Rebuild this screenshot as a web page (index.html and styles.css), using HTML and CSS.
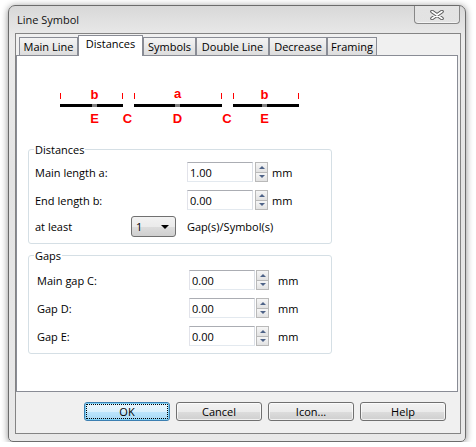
FILE: index.html
```html
<!DOCTYPE html>
<html lang="en">

<head>
    <meta charset="UTF-8">
    <title>Line Symbol</title>
    <link rel="stylesheet" href="styles.css">
</head>

<body>
    <div class="window">
        <div class="titlebar">
            <span class="title">Line Symbol</span>
            <button class="close">
                <svg width="14" height="10" viewBox="0 0 14 10">
                    <path d="M2 1.5 L12 8.5 M12 1.5 L2 8.5" stroke="#5a5a5a" stroke-width="3.6" stroke-linecap="round" />
                    <path d="M2 1.5 L12 8.5 M12 1.5 L2 8.5" stroke="#fff" stroke-width="1.6" stroke-linecap="round" />
                </svg>
            </button>
        </div>

        <div class="client">
            <div class="tabs">
                <div class="tab t-main">Main Line</div>
                <div class="tab t-dist active">Distances</div>
                <div class="tab t-sym">Symbols</div>
                <div class="tab t-double">Double Line</div>
                <div class="tab t-dec">Decrease</div>
                <div class="tab t-frame">Framing</div>
            </div>

            <div class="panel">
                <!-- preview of the line pattern -->
                <svg class="diagram" width="300" height="86" viewBox="17 56 300 86">
                    <g fill="#000">
                        <rect x="60" y="104" width="63" height="3" />
                        <rect x="134" y="104" width="88" height="3" />
                        <rect x="233" y="104" width="66" height="3" />
                    </g>
                    <g fill="#808080">
                        <rect x="92" y="104" width="5" height="3" />
                        <rect x="175" y="104" width="5" height="3" />
                        <rect x="262" y="104" width="5" height="3" />
                    </g>
                    <g fill="#f00">
                        <rect x="60" y="93" width="1" height="6" />
                        <rect x="122" y="93" width="1" height="6" />
                        <rect x="134" y="93" width="1" height="6" />
                        <rect x="221" y="93" width="1" height="6" />
                        <rect x="233" y="93" width="1" height="6" />
                        <rect x="298" y="93" width="1" height="6" />
                    </g>
                    <g class="marks" fill="#f00" text-anchor="middle">
                        <text x="94.5" y="99">b</text>
                        <text x="177.5" y="98">a</text>
                        <text x="264.5" y="99">b</text>
                        <text x="94.5" y="123">E</text>
                        <text x="127.5" y="123">C</text>
                        <text x="177.5" y="123">D</text>
                        <text x="227" y="123">C</text>
                        <text x="264.5" y="123">E</text>
                    </g>
                </svg>

                <fieldset class="group">
                    <legend>Distances</legend>
                    <div class="row">
                        <label class="lbl">Main length a:</label>
                        <input class="num" type="text" value="1.00">
                        <span class="spin"><span class="up"></span><span class="down"></span></span>
                        <span class="unit">mm</span>
                    </div>
                    <div class="row">
                        <label class="lbl">End length b:</label>
                        <input class="num" type="text" value="0.00">
                        <span class="spin"><span class="up"></span><span class="down"></span></span>
                        <span class="unit">mm</span>
                    </div>
                    <div class="row row-combo">
                        <label class="lbl short">at least</label>
                        <div class="combo"><span>1</span><span class="caret"></span></div>
                        <span class="after">Gap(s)/Symbol(s)</span>
                    </div>
                </fieldset>

                <fieldset class="group gaps">
                    <legend>Gaps</legend>
                    <div class="row">
                        <label class="lbl">Main gap C:</label>
                        <input class="num" type="text" value="0.00">
                        <span class="spin"><span class="up"></span><span class="down"></span></span>
                        <span class="unit">mm</span>
                    </div>
                    <div class="row">
                        <label class="lbl">Gap D:</label>
                        <input class="num" type="text" value="0.00">
                        <span class="spin"><span class="up"></span><span class="down"></span></span>
                        <span class="unit">mm</span>
                    </div>
                    <div class="row">
                        <label class="lbl">Gap E:</label>
                        <input class="num" type="text" value="0.00">
                        <span class="spin"><span class="up"></span><span class="down"></span></span>
                        <span class="unit">mm</span>
                    </div>
                </fieldset>
            </div>

            <div class="buttons">
                <button class="btn default">OK</button>
                <button class="btn">Cancel</button>
                <button class="btn">Icon...</button>
                <button class="btn">Help</button>
            </div>
        </div>
    </div>
</body>

</html>
```

FILE: styles.css
```css
* {
    box-sizing: border-box;
    margin: 0;
    padding: 0;
}

body {
    background: #fff;
    font: 11px "Open Sans", "Segoe UI", sans-serif;
    color: #000;
}

/* window frame */
.window {
    width: 458px;
    height: 437px;
    margin: 5px 0 0 8px;
    padding: 0 4px 7px 6px;
    border: 1px solid #6c6c6c;
    border-radius: 7px 7px 5px 5px;
    background: linear-gradient(#d8d8d8, #ececec 8%, #e3e3e3 40%, #e9e9e9);
    box-shadow: 0 1px 7px rgba(0, 0, 0, .45);
    display: flex;
    flex-direction: column;
}

.titlebar {
    height: 27px;
    display: flex;
    justify-content: space-between;
    align-items: flex-start;
}

.title {
    padding: 6px 0 0 2px;
    line-height: 15px;
    color: #111;
}

.close {
    width: 46px;
    height: 18px;
    margin-right: 1px;
    border: 1px solid #878787;
    border-top: 0;
    border-radius: 0 0 4px 4px;
    background: linear-gradient(rgba(255, 255, 255, .3), rgba(255, 255, 255, .05));
    box-shadow: inset 0 -1px 0 rgba(255, 255, 255, .6);
    display: flex;
    align-items: center;
    justify-content: center;
}

.client {
    flex: 1;
    border: 1px solid #848484;
    background: #f0f0f0;
    padding: 1px 2px 0 0;
    display: flex;
    flex-direction: column;
}

/* tab strip */
.tabs {
    height: 20px;
    padding-left: 3px;
    display: flex;
    align-items: flex-end;
}

.tab {
    height: 18px;
    border: 1px solid #898c95;
    border-bottom: 0;
    background: linear-gradient(#f4f4f4, #e9e9e9 50%, #dcdcdc);
    text-align: center;
    line-height: 16px;
    padding-top: 1px;
}

.tab.active {
    position: relative;
    z-index: 1;
    height: 21px;
    margin-bottom: -1px;
    background: #fff;
    padding-top: 0;
}

.t-main { width: 59px; }
.t-dist { width: 65px; }
.t-sym { width: 53px; }
.t-double { width: 73px; }
.t-dec { width: 58px; }
.t-frame { width: 50px; }

.panel {
    width: 442px;
    height: 337px;
    border: 1px solid #898c95;
    background: #fff;
}

.diagram {
    display: block;
}

.marks {
    font: bold 13px "Liberation Sans", Arial, sans-serif;
}

/* group boxes */
.group {
    width: 304px;
    margin-left: 11px;
    padding: 0 6px 6px;
    border: 1px solid #d5dfe5;
    border-radius: 3px;
}

.group legend {
    padding: 0 1px;
    margin-left: -1px;
    line-height: 15px;
}

.row {
    height: 20px;
    margin-top: 8px;
    display: flex;
    align-items: center;
}

.group .row:first-of-type {
    margin-top: 5px;
}

.row-combo {
    height: 21px;
    margin-top: 6px;
}

.lbl {
    width: 152px;
}

.lbl.short {
    width: 96px;
}

.num {
    width: 66px;
    height: 20px;
    padding: 0 2px;
    border: 1px solid;
    border-color: #abadb3 #dbdfe6 #e3e9ef #e2e3ea;
    font: inherit;
    outline: none;
}

.spin {
    width: 13px;
    height: 20px;
    margin-left: 2px;
    display: flex;
    flex-direction: column;
}

.spin span {
    flex: 1;
    border: 1px solid #b9b9b9;
    background: linear-gradient(#f6f6f6, #e2e2e2);
    display: flex;
    align-items: center;
    justify-content: center;
}

.spin .down {
    border-top: 0;
}

.spin span::after {
    content: '';
    border-left: 3px solid transparent;
    border-right: 3px solid transparent;
}

.spin .up::after {
    border-bottom: 3px solid #4e6387;
}

.spin .down::after {
    border-top: 3px solid #4e6387;
}

.unit {
    margin-left: 4px;
}

.combo {
    width: 45px;
    height: 21px;
    padding: 0 6px 0 4px;
    border: 1px solid #707070;
    border-radius: 3px;
    background: linear-gradient(#f2f2f2, #ebebeb 50%, #dddddd 50%, #cfcfcf);
    display: flex;
    align-items: center;
    justify-content: space-between;
}

.caret {
    border-left: 4px solid transparent;
    border-right: 4px solid transparent;
    border-top: 4px solid #000;
}

.after {
    margin-left: 11px;
}

.gaps {
    margin-top: 4px;
    padding: 0 8px 7px;
}

.gaps legend {
    margin-left: -3px;
}

.gaps .row:first-of-type {
    margin-top: 7px;
}

.gaps .spin {
    margin-left: 1px;
}

.gaps .unit {
    margin-left: 9px;
}

/* dialog buttons */
.buttons {
    padding: 10px 12px 0 0;
    display: flex;
    justify-content: flex-end;
    gap: 6px;
}

.btn {
    width: 86px;
    height: 19px;
    border: 1px solid #707070;
    border-radius: 3px;
    background: linear-gradient(#f2f2f2, #ebebeb 50%, #dddddd 50%, #cfcfcf);
    box-shadow: inset 0 0 0 1px rgba(255, 255, 255, .7);
    font: inherit;
    color: #000;
}

.btn.default {
    border-color: #3c7fb1;
    background: linear-gradient(#eaf6fd, #d9f0fc 50%, #bee6fd 50%, #a7d9f5);
    box-shadow: inset 0 0 0 1px #7fd2f7;
    outline: 1px dotted #000;
    outline-offset: -3px;
}
```
